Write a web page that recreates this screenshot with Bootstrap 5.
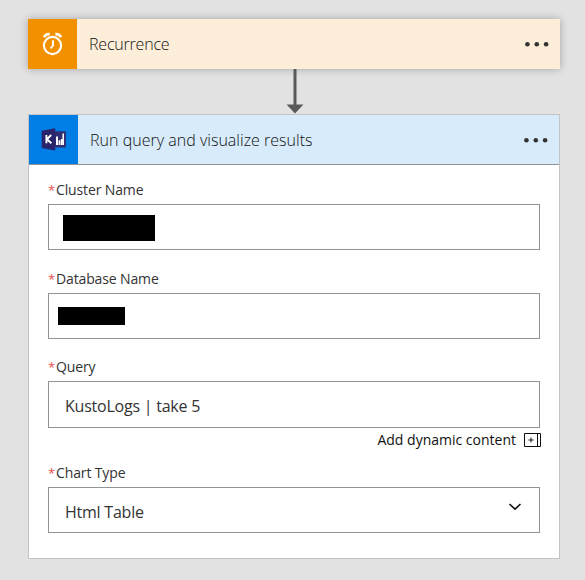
<!DOCTYPE html>
<html lang="en">
<head>
<meta charset="utf-8">
<meta name="viewport" content="width=device-width, initial-scale=1">
<title>Logic app designer</title>
<link href="https://cdn.jsdelivr.net/npm/bootstrap@5.3.0/dist/css/bootstrap.min.css" rel="stylesheet">
<style>
body{background:#e2e2e2;font-family:"Open Sans","Noto Sans",sans-serif;color:#333;height:580px;overflow:hidden}
.flow{width:532px;margin-left:28px;padding-top:19px}
.trigger{height:50px;background:#fdeeda;box-shadow:0 0 8px rgba(0,0,0,.28)}
.tile{width:49px;height:100%}
.tile-orange{background:#f29100}
.tile-blue{background:#007ee5}
.step-title{font-size:16px;font-weight:300;line-height:24px;color:#111;padding-left:12px;white-space:nowrap}
.t-rec{letter-spacing:-.2px}
.t-run{letter-spacing:.02px}
.arrow-row{height:45px;padding-left:258px}
.action{height:445px;background:#fff;border:1px solid #c4c4c4}
.action-head{height:50px;background:#d8ebfa;border-bottom:1px solid #929497}
.dots-a{margin-right:11px}
.form-area{padding:15px 19px 0}
.lbl{font-size:14px;line-height:20px;height:20px;white-space:nowrap;letter-spacing:-.13px}
.req{color:#e8504c;width:8px;font-size:13px}
.gap-db{margin-top:19px}
.gap-query{margin-top:18px}
.gap-chart{margin-top:13px}
.box{height:46px;border:1px solid #919396;background:#fff}
.box-q{height:47px}
.val{font-size:16px;line-height:24px;padding-left:16px;padding-top:3px;letter-spacing:-.23px;white-space:nowrap}
.mask-a{width:92px;height:26px;margin-left:14px;margin-top:2px;background:#000}
.mask-b{width:67px;height:18px;margin-left:9px;background:#000}
.dyn{font-size:14px;line-height:20px;color:#111;height:20px;margin-top:2px;margin-right:-1px;white-space:nowrap}
.chev{margin-right:17px;margin-bottom:6px}
svg{display:block;flex:none}
</style>
<script src="https://cdn.jsdelivr.net/npm/bootstrap@5.3.0/dist/js/bootstrap.bundle.min.js"></script>
</head>
<body>
<main class="flow">
  <section class="trigger d-flex align-items-center">
    <div class="tile tile-orange d-flex align-items-center justify-content-center">
      <svg width="22" height="24" viewBox="0 0 22 24" fill="none" stroke="#fff"><circle cx="10.5" cy="13.5" r="8.6" stroke-width="2.1"/><path d="M11 8.3v5.4l-2.4 2.6" stroke-width="1.9"/><path d="M2 5.2C3 3 5 1.9 7.6 2.1M19 5.2C18 3 16 1.9 13.4 2.1" stroke-width="2.6"/></svg>
    </div>
    <div class="step-title t-rec">Recurrence</div>
    <svg class="ms-auto dots-a" width="24" height="6" fill="#333"><circle cx="2.4" cy="3.3" r="2.3"/><circle cx="11.8" cy="3.3" r="2.3"/><circle cx="21.1" cy="3.3" r="2.3"/></svg>
  </section>
  <div class="arrow-row">
    <svg width="18" height="45" fill="#595959"><path d="M7.5 0h3v35.5h6.9L9 44.5.6 35.5h6.9z"/></svg>
  </div>
  <section class="action">
    <header class="action-head d-flex align-items-center">
      <div class="tile tile-blue d-flex align-items-center justify-content-center">
        <svg width="25" height="24" viewBox="0 0 25 24"><path d="M13 3.3h11.9v16.2H13z" fill="#322e74"/><path d="M.7 2.8 14.2.2v22.4L.7 19.9z" fill="#29246b"/><path d="M15 17V8.6h2V17zM17.6 17v-4.8h1.8V17zM19.9 17v-6h1.4v6zM21.4 17V5.4H23V17z" fill="#fff"/><path d="M5.4 7v8.3M10.2 7l-4.3 4.3 4.5 4" stroke="#fff" stroke-width="1.9" fill="none"/></svg>
      </div>
      <div class="step-title t-run">Run query and visualize results</div>
      <svg class="ms-auto dots-a" width="24" height="6" fill="#333"><circle cx="2.4" cy="3.3" r="2.3"/><circle cx="11.8" cy="3.3" r="2.3"/><circle cx="21.1" cy="3.3" r="2.3"/></svg>
    </header>
    <div class="form-area d-flex flex-column">
      <div class="lbl d-flex mb-1"><span class="req">*</span><span>Cluster Name</span></div>
      <div class="box d-flex align-items-center"><div class="mask-a"></div></div>
      <div class="lbl d-flex mb-1 gap-db"><span class="req">*</span><span>Database Name</span></div>
      <div class="box d-flex align-items-center"><div class="mask-b"></div></div>
      <div class="lbl d-flex mb-1 gap-query"><span class="req">*</span><span>Query</span></div>
      <div class="box box-q d-flex align-items-center"><div class="val">KustoLogs | take 5</div></div>
      <div class="dyn d-flex justify-content-end align-items-center"><span>Add dynamic content</span>
        <svg class="ms-2" width="17" height="14" fill="none" stroke="#111"><path d="M.5.5h16v13H.5zM13.5.5v13M4.5 7h5M7 4.5v5"/></svg></div>
      <div class="lbl d-flex mb-1 gap-chart"><span class="req">*</span><span>Chart Type</span></div>
      <div class="box d-flex align-items-center"><div class="val">Html Table</div>
        <svg class="ms-auto chev" width="14" height="8" fill="none" stroke="#111" stroke-width="1.6"><path d="M1.5 1 7 6.2 12.5 1"/></svg></div>
    </div>
  </section>
</main>
</body>
</html>
